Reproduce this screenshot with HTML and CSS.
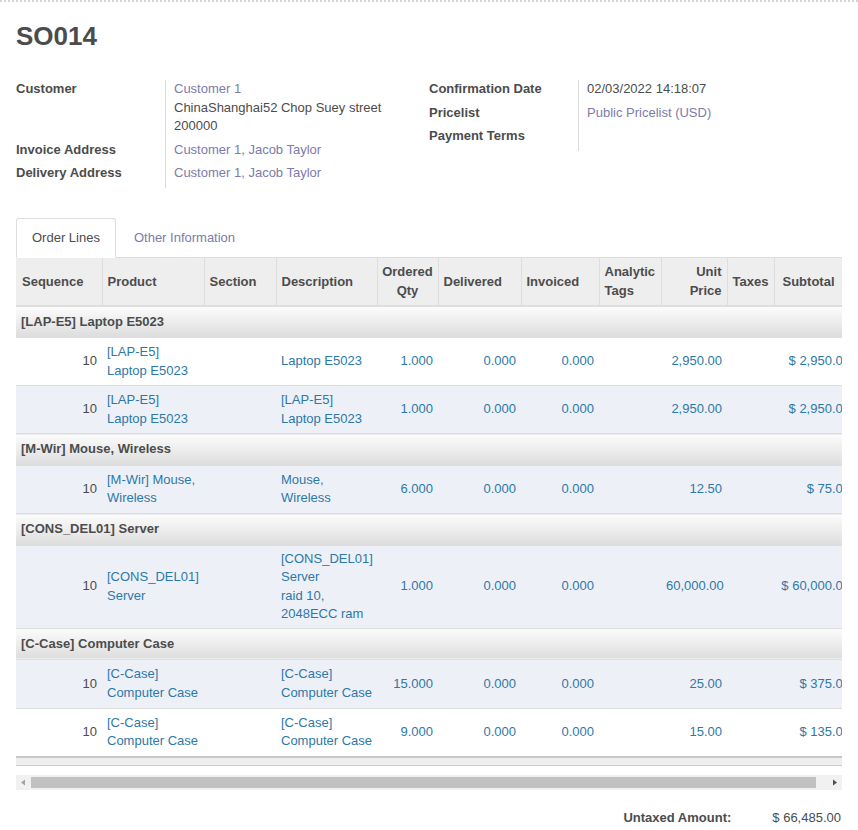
FILE: index.html
```html
<!DOCTYPE html>
<html>
<head>
<meta charset="utf-8">
<link rel="stylesheet" href="styles.css">
</head>
<body>
<div class="sheet">
  <h1 class="title">SO014</h1>
  <div class="groups">
    <div class="group">
      <div class="lbl">Customer</div>
      <div class="val"><span class="link">Customer 1</span><br>ChinaShanghai52 Chop Suey street<br>200000</div>
      <div class="lbl">Invoice Address</div>
      <div class="val"><span class="link">Customer 1, Jacob Taylor</span></div>
      <div class="lbl">Delivery Address</div>
      <div class="val"><span class="link">Customer 1, Jacob Taylor</span></div>
    </div>
    <div class="group">
      <div class="lbl">Confirmation Date</div>
      <div class="val">02/03/2022 14:18:07</div>
      <div class="lbl">Pricelist</div>
      <div class="val"><span class="link">Public Pricelist (USD)</span></div>
      <div class="lbl">Payment Terms</div>
      <div class="val"></div>
    </div>
  </div>

  <div class="tabs">
    <div class="tab active">Order Lines</div>
    <div class="tab">Other Information</div>
  </div>

  <div class="table-wrap">
    <table class="lines">
      <colgroup>
        <col style="width:86px"><col style="width:102px"><col style="width:72px"><col style="width:101px"><col style="width:61px"><col style="width:83px"><col style="width:78px"><col style="width:62px"><col style="width:66px"><col style="width:47px"><col style="width:81px">
      </colgroup>
      <thead>
        <tr>
          <th>Sequence</th>
          <th>Product</th>
          <th>Section</th>
          <th>Description</th>
          <th class="center">Ordered<br>Qty</th>
          <th>Delivered</th>
          <th>Invoiced</th>
          <th>Analytic<br>Tags</th>
          <th class="num">Unit<br>Price</th>
          <th>Taxes</th>
          <th class="sub">Subtotal</th>
        </tr>
      </thead>
      <tbody>
        <tr class="grp"><td colspan="11">[LAP-E5] Laptop E5023</td></tr>
        <tr>
          <td class="num seq">10</td>
          <td class="txt">[LAP-E5]<br>Laptop E5023</td>
          <td></td>
          <td class="txt">Laptop E5023</td>
          <td class="num">1.000</td>
          <td class="num">0.000</td>
          <td class="num">0.000</td>
          <td></td>
          <td class="num">2,950.00</td>
          <td></td>
          <td class="num">$ 2,950.00</td>
        </tr>
        <tr>
          <td class="num seq">10</td>
          <td class="txt">[LAP-E5]<br>Laptop E5023</td>
          <td></td>
          <td class="txt">[LAP-E5]<br>Laptop E5023</td>
          <td class="num">1.000</td>
          <td class="num">0.000</td>
          <td class="num">0.000</td>
          <td></td>
          <td class="num">2,950.00</td>
          <td></td>
          <td class="num">$ 2,950.00</td>
        </tr>
        <tr class="grp"><td colspan="11">[M-Wir] Mouse, Wireless</td></tr>
        <tr>
          <td class="num seq">10</td>
          <td class="txt">[M-Wir] Mouse,<br>Wireless</td>
          <td></td>
          <td class="txt">Mouse,<br>Wireless</td>
          <td class="num">6.000</td>
          <td class="num">0.000</td>
          <td class="num">0.000</td>
          <td></td>
          <td class="num">12.50</td>
          <td></td>
          <td class="num">$ 75.00</td>
        </tr>
        <tr class="grp"><td colspan="11">[CONS_DEL01] Server</td></tr>
        <tr class="tight">
          <td class="num seq">10</td>
          <td class="txt">[CONS_DEL01]<br>Server</td>
          <td></td>
          <td class="txt">[CONS_DEL01]<br>Server<br>raid 10,<br>2048ECC ram</td>
          <td class="num">1.000</td>
          <td class="num">0.000</td>
          <td class="num">0.000</td>
          <td></td>
          <td class="num">60,000.00</td>
          <td></td>
          <td class="num">$ 60,000.00</td>
        </tr>
        <tr class="grp"><td colspan="11">[C-Case] Computer Case</td></tr>
        <tr>
          <td class="num seq">10</td>
          <td class="txt">[C-Case]<br>Computer Case</td>
          <td></td>
          <td class="txt">[C-Case]<br>Computer Case</td>
          <td class="num">15.000</td>
          <td class="num">0.000</td>
          <td class="num">0.000</td>
          <td></td>
          <td class="num">25.00</td>
          <td></td>
          <td class="num">$ 375.00</td>
        </tr>
        <tr>
          <td class="num seq">10</td>
          <td class="txt">[C-Case]<br>Computer Case</td>
          <td></td>
          <td class="txt">[C-Case]<br>Computer Case</td>
          <td class="num">9.000</td>
          <td class="num">0.000</td>
          <td class="num">0.000</td>
          <td></td>
          <td class="num">15.00</td>
          <td></td>
          <td class="num">$ 135.00</td>
        </tr>
      </tbody>
      <tfoot>
        <tr><td colspan="11"></td></tr>
      </tfoot>
    </table>
  </div>

  <div class="hscroll">
    <div class="arrow"><svg width="15" height="15" viewBox="0 0 15 15"><path d="M5 7.5 L9 4.5 L9 10.5 Z" fill="#a3a3a3"/></svg></div>
    <div class="track"><div class="thumb"></div></div>
    <div class="arrow"><svg width="15" height="15" viewBox="0 0 15 15"><path d="M10 7.5 L6 4.5 L6 10.5 Z" fill="#505050"/></svg></div>
  </div>

  <div class="totals">
    <span class="tlabel">Untaxed Amount:</span>
    <span class="tval">$ 66,485.00</span>
  </div>
</div>
</body>
</html>
```

FILE: styles.css
```css
html, body {
  margin: 0;
  padding: 0;
  background: #fff;
}
body {
  font-family: "Liberation Sans", Arial, sans-serif;
  font-size: 13px;
  line-height: 1.42857;
  color: #4c4c4c;
  border-top: 2px dotted #d4d4d4;
}
.sheet {
  padding: 0 16px;
}
.title {
  margin: 19px 0 0;
  font-size: 26px;
  line-height: 30px;
  font-weight: bold;
  color: #4c4c4c;
}
.groups {
  display: grid;
  grid-template-columns: 413px 413px;
  margin-top: 29px;
}
.group {
  display: grid;
  grid-template-columns: 149px 1fr;
  align-content: start;
}
.lbl {
  font-weight: bold;
  padding-bottom: 5px;
}
.val {
  border-left: 1px solid #dcdcdc;
  padding: 0 0 5px 8px;
}
.link {
  color: #7c7bad;
}
.tabs {
  display: flex;
  margin-top: 30px;
  border-bottom: 1px solid #dddddd;
}
.tab {
  padding: 10px 15px 10px;
  margin-right: 2px;
  margin-bottom: -1px;
  border: 1px solid transparent;
  border-radius: 3px 3px 0 0;
  color: #7c7bad;
}
.tab.active {
  border-color: #dddddd;
  border-bottom-color: #fff;
  background: #fff;
  color: #4c4c4c;
}
.table-wrap {
  width: 826px;
  overflow: hidden;
}
.lines {
  table-layout: fixed;
  width: 839px;
  border-collapse: collapse;
}
.lines th {
  background: #eeeeee;
  font-weight: bold;
  text-align: left;
  vertical-align: middle;
  padding: 5px 5px 4px 5px;
  border-left: 1px solid #dedede;
  border-bottom: 2px solid #dedede;
  white-space: nowrap;
}
.lines th:first-child {
  border-left: none;
  padding-left: 6px;
}
.lines th.center {
  text-align: center;
  padding-left: 0;
  padding-right: 0;
}
.lines th.num {
  text-align: right;
}
.lines th.sub {
  padding-left: 8px;
}
.lines td {
  padding: 5px 5px;
  vertical-align: middle;
  color: #2c79a9;
  border-top: 1px solid #dddddd;
}
.lines tr.tight td {
  padding-top: 4px;
  padding-bottom: 4px;
}
.lines td.num {
  text-align: right;
  white-space: nowrap;
}
.lines td.txt {
  white-space: nowrap;
  overflow: hidden;
}
.lines td.seq {
  color: #4c4c4c;
}
.lines tbody tr:nth-child(odd) td {
  background: #eef0f7;
}
.lines tr.grp td {
  background: linear-gradient(#fcfcfc, #dddddd);
  font-weight: bold;
  color: #4c4c4c;
  padding: 6px 5px 6px 5px;
}
.lines tbody tr.grp:nth-child(odd) td {
  background: linear-gradient(#fcfcfc, #dddddd);
}
.lines tfoot td {
  height: 7px;
  padding: 0;
  background: #eeeeee;
  border-top: 2px solid #c8c8c8;
  border-bottom: 1px solid #cccccc;
}
.hscroll {
  display: flex;
  height: 15px;
  margin-top: 9px;
  background: #f1f1f1;
}
.arrow {
  width: 15px;
  height: 15px;
  flex: none;
}
.arrow svg {
  display: block;
}
.track {
  flex: 1;
  padding: 2px 11px 2px 0;
}
.thumb {
  height: 11px;
  background: #c1c1c1;
}
.totals {
  display: flex;
  justify-content: flex-end;
  gap: 41px;
  margin-top: 19px;
  padding-right: 1px;
}
.tlabel {
  font-weight: bold;
}
```
